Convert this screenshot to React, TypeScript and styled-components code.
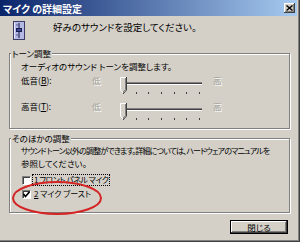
import React from "react";
import styled, { createGlobalStyle } from "styled-components";

const GlobalStyle = createGlobalStyle`
  html, body {
    margin: 0;
    padding: 0;
    background: #d4d0c8;
  }
  body {
    font-family: "Noto Sans CJK JP", "Liberation Sans", sans-serif;
    font-size: 8.5px;
    color: #000;
  }
`;

const Window = styled.div`
  position: relative;
  width: 300px;
  height: 242px;
  box-sizing: border-box;
  padding: 0 3px 4px 0;
  display: flex;
  flex-direction: column;
  background: #d4d0c8;
  box-shadow: inset -1px -1px #404040, inset -2px -2px #808080;
  font-feature-settings: "palt";
  overflow: hidden;
`;

const TitleBar = styled.div`
  height: 16px;
  flex: none;
  display: flex;
  align-items: center;
  justify-content: space-between;
  padding: 0 2px 0 3px;
  background: linear-gradient(to right, #0a246a, #a6caf0);
  color: #fff;
  font-weight: bold;
  font-size: 10px;
`;

const CloseButton = styled.div`
  width: 11px;
  height: 10px;
  display: flex;
  align-items: center;
  justify-content: center;
  background: #d4d0c8;
  box-shadow: inset -1px -1px #404040, inset 1px 1px #fff,
    inset -2px -2px #808080;
`;

const Body = styled.div`
  flex: 1;
  display: flex;
  flex-direction: column;
  padding: 0 7px 0 9px;
`;

const Header = styled.div`
  height: 31px;
  display: flex;
  align-items: flex-start;
  padding: 4px 0 0 4px;
  box-sizing: border-box;
`;

const HeaderIcon = styled.svg`
  margin-top: 1px;
  flex: none;
`;

const HeaderText = styled.div`
  margin: 1px 0 0 28px;
  font-size: 9.5px;
  line-height: 12px;
`;

const Group = styled.fieldset<{ $bottom: number }>`
  margin: 0;
  min-inline-size: 0;
  padding: 1px 10px ${(p) => p.$bottom}px 11px;
  border: 1px solid #808080;
  box-shadow: inset 1px 1px #fff, 1px 1px #fff;
  & + & {
    margin-top: 3px;
  }
`;

const Legend = styled.legend`
  margin-left: -10px;
  padding: 0 1px;
  line-height: 12px;
  background: #d4d0c8;
`;

const Line = styled.div<{ $size?: number; $spacing?: number }>`
  line-height: 12px;
  white-space: nowrap;
  font-size: ${(p) => p.$size ?? 8.5}px;
  letter-spacing: ${(p) => p.$spacing ?? 0}px;
`;

const SliderList = styled.div`
  margin-top: 2px;
`;

const SliderRow = styled.div`
  display: grid;
  grid-template-columns: 71px 26px 88px 1fr;
  height: 26px;
`;

const RowLabel = styled.span`
  line-height: 12px;
`;

const Disabled = styled.span<{ $shift?: number }>`
  line-height: 12px;
  color: #a09c94;
  text-shadow: 1px 1px #fff;
  margin-left: ${(p) => p.$shift ?? 0}px;
`;

const Slider = styled.div`
  position: relative;
  height: 26px;
`;

const Track = styled.div`
  margin: 8px 4px 0 4px;
  height: 1px;
  background: #404040;
  border-top: 1px solid #808080;
  border-bottom: 1px solid #fff;
`;

const Ticks = styled.div`
  display: flex;
  justify-content: space-between;
  margin: 7px 6px 0 5px;
`;

const Tick = styled.span`
  width: 1px;
  height: 2px;
  background: #404040;
`;

const Thumb = styled.svg`
  position: absolute;
  left: 2px;
  top: 3px;
`;

const CheckList = styled.div`
  margin-top: 4px;
`;

const CheckRow = styled.div`
  display: flex;
  align-items: center;
  height: 14px;
  padding-left: 1px;
`;

const Box = styled.span`
  width: 9px;
  height: 9px;
  box-sizing: border-box;
  display: flex;
  align-items: center;
  justify-content: center;
  background: #fff;
  border-top: 1px solid #808080;
  border-left: 1px solid #808080;
  border-right: 1px solid #fff;
  border-bottom: 1px solid #fff;
  box-shadow: inset 1px 1px #404040;
`;

const CheckLabel = styled.span<{ $focus?: boolean; $spacing: number }>`
  margin-left: 1px;
  padding: 0 1px 0 2px;
  font-size: 8px;
  line-height: 12px;
  letter-spacing: ${(p) => p.$spacing}px;
  outline: ${(p) => (p.$focus ? "1px dotted #000" : "none")};
  outline-offset: -1px;
`;

const Footer = styled.div`
  display: flex;
  justify-content: flex-end;
  padding: 7px 2px 0 0;
`;

const Button = styled.div`
  width: 58px;
  height: 14px;
  box-sizing: border-box;
  display: flex;
  align-items: center;
  justify-content: center;
  border: 1px solid #000;
  box-shadow: inset -1px -1px #404040, inset 1px 1px #fff,
    inset -2px -2px #808080;
  line-height: 12px;
`;

const Annotation = styled.svg`
  position: absolute;
  left: 11px;
  top: 179px;
  pointer-events: none;
`;

const MixerIcon = () => (
  <HeaderIcon width="12" height="19" viewBox="0 0 12 19">
    <rect x="0.5" y="0.5" width="11" height="18" fill="#b4b8e4" stroke="#3c3c64" />
    <line x1="1.5" y1="1.5" x2="1.5" y2="17.5" stroke="#e8e8ff" />
    <line x1="6" y1="2" x2="6" y2="17" stroke="#2c2c5c" strokeWidth="1.2" />
    <rect x="3.5" y="7.5" width="5" height="3" fill="#3a4a9a" stroke="#1c1c48" />
    <line x1="3" y1="4" x2="5" y2="4" stroke="#5a5a8a" />
    <line x1="3" y1="14" x2="5" y2="14" stroke="#5a5a8a" />
  </HeaderIcon>
);

const ThumbShape = () => (
  <Thumb width="7" height="17" viewBox="0 0 7 17">
    <polygon points="0,0 6,0 6,13 3,16 0,13" fill="#d4d0c8" />
    <polyline points="0.5,13 0.5,0.5 6,0.5" fill="none" stroke="#fff" />
    <polyline points="6.5,0 6.5,13 3.5,16.5" fill="none" stroke="#404040" />
    <polyline points="5.5,1 5.5,12.5 3,15" fill="none" stroke="#808080" />
    <line x1="0.5" y1="13" x2="3" y2="16" stroke="#fff" />
  </Thumb>
);

const Check = () => (
  <svg width="7" height="7" viewBox="0 0 7 7">
    <polyline points="0.5,3 2.5,5.5 6.5,0.8" fill="none" stroke="#000" strokeWidth="1.6" />
  </svg>
);

const TICKS = [0, 1, 2, 3, 4, 5, 6];

const SliderLine = ({ label, hotkey }: { label: string; hotkey: string }) => (
  <SliderRow>
    <RowLabel>
      {label}(<u>{hotkey}</u>):
    </RowLabel>
    <Disabled>低</Disabled>
    <Slider>
      <Track />
      <Ticks>
        {TICKS.map((t) => (
          <Tick key={t} />
        ))}
      </Ticks>
      <ThumbShape />
    </Slider>
    <Disabled $shift={7}>高</Disabled>
  </SliderRow>
);

const App = () => {
  return (
    <>
      <GlobalStyle />
      <Window>
        <TitleBar>
          <span>マイク の詳細設定</span>
          <CloseButton>
            <svg width="7" height="6" viewBox="0 0 7 6">
              <path d="M0.5 0.5 L6.5 5.5 M6.5 0.5 L0.5 5.5" stroke="#000" strokeWidth="1.4" />
            </svg>
          </CloseButton>
        </TitleBar>
        <Body>
          <Header>
            <MixerIcon />
            <HeaderText>好みのサウンドを設定してください。</HeaderText>
          </Header>
          <Group $bottom={2}>
            <Legend>トーン調整</Legend>
            <Line>オーディオのサウンド トーンを調整します。</Line>
            <SliderList>
              <SliderLine label="低音" hotkey="B" />
              <SliderLine label="高音" hotkey="T" />
            </SliderList>
          </Group>
          <Group $bottom={11}>
            <Legend>そのほかの調整</Legend>
            <Line $size={8} $spacing={-0.85}>
              サウンド トーン以外の調整ができます。詳細については、ハードウェアのマニュアルを
            </Line>
            <Line>参照してください。</Line>
            <CheckList>
              <CheckRow>
                <Box />
                <CheckLabel $focus $spacing={-0.5}>
                  <u>1</u> フロント パネル マイク
                </CheckLabel>
              </CheckRow>
              <CheckRow>
                <Box>
                  <Check />
                </Box>
                <CheckLabel $spacing={0}>
                  <u>2</u> マイク ブースト
                </CheckLabel>
              </CheckRow>
            </CheckList>
          </Group>
          <Footer>
            <Button>閉じる</Button>
          </Footer>
        </Body>
        <Annotation width="94" height="38" viewBox="0 0 94 38">
          <ellipse cx="46" cy="19" rx="44" ry="16" fill="none" stroke="#d42424" strokeWidth="2" />
        </Annotation>
      </Window>
    </>
  );
};

export default App;
